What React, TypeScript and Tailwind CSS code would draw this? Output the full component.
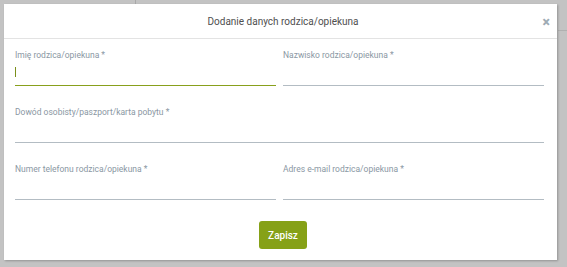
const fieldsRow1 = [
  { label: "Imię rodzica/opiekuna *", focused: true },
  { label: "Nazwisko rodzica/opiekuna *", focused: false },
];

const fieldsRow3 = [
  { label: "Numer telefonu rodzica/opiekuna *", focused: false },
  { label: "Adres e-mail rodzica/opiekuna *", focused: false },
];

type FieldProps = {
  label: string;
  focused?: boolean;
};

const Field = ({ label, focused = false }: FieldProps) => {
  return (
    <div className="flex flex-col">
      <label className="h-[12px] text-[8.5px] leading-[12px] text-[#8a97a3]">
        {label}
      </label>
      <div
        className={
          focused
            ? "flex h-[25px] items-center border-b border-[#88a01c]"
            : "flex h-[25px] items-center border-b border-[#b3bcc3]"
        }
      >
        {focused && <span className="mt-[-2px] h-[10px] w-px bg-[#7b8f1a]" />}
      </div>
    </div>
  );
};

export default function App() {
  return (
    <div
      className="relative h-[267px] w-[567px] overflow-hidden bg-[#c3c3c3] pl-[4px] pt-[4px]"
      style={{ fontFamily: "Roboto, 'Noto Sans', sans-serif" }}
    >
      {/* page behind the modal */}
      <div className="absolute left-[135px] top-0 h-[4px] w-px bg-[#a9a9a9]" />
      <div className="absolute right-0 top-[30px] h-px w-[9px] bg-[#b0b0b0]" />

      <div className="relative flex h-[256px] w-[553px] flex-col bg-white shadow-[1px_1px_2px_rgba(0,0,0,0.25)]">
        {/* Header */}
        <div className="relative flex h-[35px] items-center justify-center border-b border-[#e3e3e3]">
          <h2 className="ml-[5px] text-[10px] text-[#4f4f4f]">Dodanie danych rodzica/opiekuna</h2>
          <button className="absolute right-[7px] top-[11px] text-[14px] font-black leading-none text-[#9eabb4]">
            ×
          </button>
        </div>

        {/* Body */}
        <div className="flex flex-col pl-[11px] pr-[13px] pt-[10px]">
          <div className="grid grid-cols-2 gap-x-[7px]">
            {fieldsRow1.map((f) => (
              <Field key={f.label} label={f.label} focused={f.focused} />
            ))}
          </div>
          <div className="mt-[20px]">
            <Field label="Dowód osobisty/paszport/karta pobytu *" />
          </div>
          <div className="mt-[20px] grid grid-cols-2 gap-x-[7px]">
            {fieldsRow3.map((f) => (
              <Field key={f.label} label={f.label} />
            ))}
          </div>
          <div className="mt-[21px] flex justify-center pl-[7px]">
            <button className="h-[28px] w-[48px] rounded-[3px] bg-[#86a117] text-[10px] font-medium text-white">
              Zapisz
            </button>
          </div>
        </div>
      </div>
    </div>
  );
}
